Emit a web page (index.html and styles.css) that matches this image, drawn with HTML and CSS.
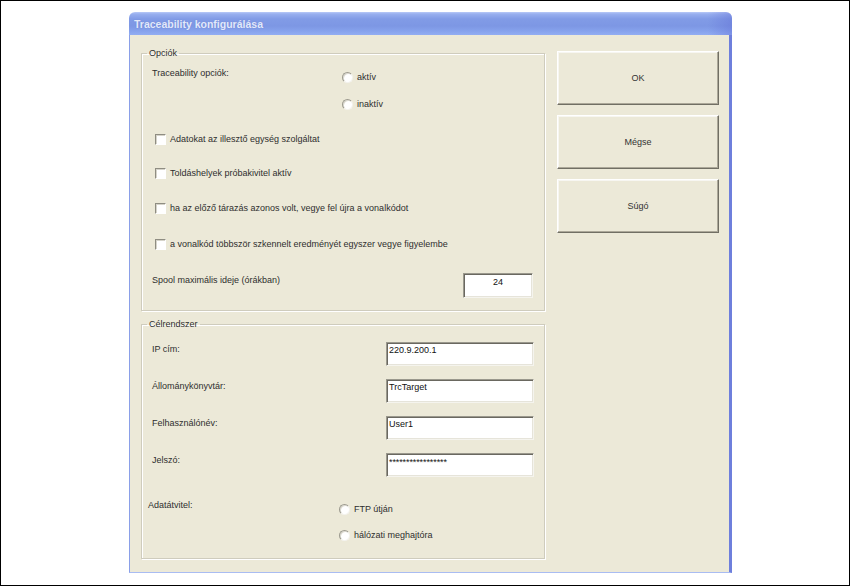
FILE: index.html
```html
<!DOCTYPE html>
<html lang="hu">
<head>
<meta charset="utf-8">
<title>Traceability konfigurálása</title>
<link rel="stylesheet" href="styles.css">
</head>
<body>
<div class="screen">
  <div class="window">
    <div class="titlebar"><span class="title">Traceability konfigurálása</span></div>
    <div class="frame">
      <div class="client">
        <div class="main">
          <fieldset class="group group-opt">
            <legend>Opciók</legend>
            <div class="opt-row">
              <div class="lbl col-opt">Traceability opciók:</div>
              <div class="radios radios-opt">
                <div class="radio"><span class="rb"></span><span class="lbl">aktív</span></div>
                <div class="radio"><span class="rb"></span><span class="lbl">inaktív</span></div>
              </div>
            </div>
            <div class="checks">
              <div class="check c1"><span class="cb"></span><span class="lbl">Adatokat az illesztő egység szolgáltat</span></div>
              <div class="check c2"><span class="cb"></span><span class="lbl">Toldáshelyek próbakivitel aktív</span></div>
              <div class="check c3"><span class="cb"></span><span class="lbl">ha az előző tárazás azonos volt, vegye fel újra a vonalkódot</span></div>
              <div class="check c4"><span class="cb"></span><span class="lbl">a vonalkód többször szkennelt eredményét egyszer vegye figyelembe</span></div>
            </div>
            <div class="spool-row">
              <div class="lbl spool-lbl">Spool maximális ideje (órákban)</div>
              <div class="edit edit-spool">24</div>
            </div>
          </fieldset>
          <fieldset class="group group-target">
            <legend>Célrendszer</legend>
            <div class="fields">
              <div class="field-row"><div class="lbl field-lbl">IP cím:</div><div class="edit edit-wide">220.9.200.1</div></div>
              <div class="field-row"><div class="lbl field-lbl">Állománykönyvtár:</div><div class="edit edit-wide">TrcTarget</div></div>
              <div class="field-row"><div class="lbl field-lbl">Felhasználónév:</div><div class="edit edit-wide">User1</div></div>
              <div class="field-row"><div class="lbl field-lbl">Jelszó:</div><div class="edit edit-wide edit-pass">*****************</div></div>
            </div>
            <div class="transfer-row">
              <div class="lbl col-transfer">Adatátvitel:</div>
              <div class="radios radios-transfer">
                <div class="radio"><span class="rb"></span><span class="lbl">FTP útján</span></div>
                <div class="radio"><span class="rb"></span><span class="lbl">hálózati meghajtóra</span></div>
              </div>
            </div>
          </fieldset>
        </div>
        <div class="buttons">
          <div class="btn">OK</div>
          <div class="btn">Mégse</div>
          <div class="btn">Súgó</div>
        </div>
      </div>
    </div>
  </div>
</div>
</body>
</html>
```
FILE: styles.css
```css
html, body {
  margin: 0;
  padding: 0;
  background: #fff;
}

body {
  font-family: "Liberation Sans", Arial, sans-serif;
  font-size: 9px;
  color: #2e2e2e;
}

.screen {
  width: 850px;
  height: 586px;
  box-sizing: border-box;
  border: 1px solid #000;
  background: #fff;
  padding: 11px 0 0 128px;
}

.window {
  width: 603px;
  height: 561px;
  display: flex;
  flex-direction: column;
  border-radius: 6px 6px 0 0;
  overflow: hidden;
}

.titlebar {
  height: 23px;
  flex: none;
  display: flex;
  align-items: center;
  padding-left: 5px;
  background:
    linear-gradient(to right, rgba(255,255,255,0) 0, rgba(255,255,255,0) 96%, rgba(90,100,210,0.35) 100%),
    linear-gradient(to bottom, #b8c9f7 0, #98afef 2px, #819be6 7px, #7d97e4 14px, #86a2ec 19px, #92adf2 23px);
}

.title {
  font-family: "Liberation Sans", Arial, sans-serif;
  font-weight: bold;
  font-size: 10.5px;
  color: #e2e9fb;
  text-shadow: 0 0 1px rgba(80, 100, 190, 0.5);
  padding-top: 1px;
}

.frame {
  flex: 1;
  display: flex;
  border-left: 1px solid #8a9fe8;
  border-right: 3px solid #6e7fdc;
  border-bottom: 1px solid #a9bcf2;
}

.client {
  flex: 1;
  background: #ece9d8;
  display: flex;
  gap: 12px;
  padding: 13px 0 0 11px;
}

.main {
  width: 404px;
  display: flex;
  flex-direction: column;
}

.lbl {
  line-height: 12px;
  white-space: nowrap;
}

/* group boxes */
.group {
  margin: 0;
  padding: 0 10px;
  min-width: 0;
  box-sizing: border-box;
  border: 1px solid #cfccbd;
  box-shadow: 1px 1px 0 #fff, inset 1px 1px 0 #fff;
}

.group legend {
  padding: 0 2px;
  margin-left: -5px;
  line-height: 11px;
  font-size: 9px;
  color: #2e2e2e;
}

.group-opt {
  height: 263px;
}

.group-target {
  height: 240px;
  margin-top: 8px;
}

/* Opciók */
.opt-row {
  display: flex;
  margin-top: 8px;
}

.col-opt {
  width: 190px;
}

.radios {
  display: flex;
  flex-direction: column;
}

.radios-opt {
  margin-top: 4px;
  gap: 15px;
}

.radio {
  display: flex;
  align-items: center;
  gap: 4px;
  height: 12px;
}

.rb {
  width: 11px;
  height: 11px;
  box-sizing: border-box;
  border-radius: 50%;
  border: 1px solid;
  border-color: #9c9a8f #f4f3ee #f4f3ee #9c9a8f;
  background: radial-gradient(circle at 60% 60%, #ffffff 50%, #eceae1 100%);
  box-shadow: inset 1px 1px 0 #dcdad0;
}

.checks {
  display: flex;
  flex-direction: column;
}

.check {
  display: flex;
  align-items: center;
  gap: 4px;
  height: 12px;
  margin-left: 3px;
}

.c1 { margin-top: 23px; }
.c2 { margin-top: 22px; }
.c3 { margin-top: 23px; }
.c4 { margin-top: 24px; }

.cb {
  width: 11px;
  height: 11px;
  box-sizing: border-box;
  border: 1px solid;
  border-color: #8f8d82 #ffffff #ffffff #8f8d82;
  background: #fff;
  box-shadow: inset 1px 1px 0 #d6d4ca;
}

.spool-row {
  display: flex;
  justify-content: space-between;
  align-items: flex-start;
  margin-top: 23px;
  padding-right: 1px;
}

.spool-lbl {
  padding-top: 1px;
}

/* edit boxes */
.edit {
  box-sizing: border-box;
  background: #fff;
  border: 1px solid;
  border-color: #9a988d #f5f4ee #f5f4ee #9a988d;
  box-shadow: inset 1px 1px 0 #6a6860, inset -1px -1px 0 #e6e4da;
  color: #111;
  line-height: 10px;
  white-space: nowrap;
}

.edit-spool {
  width: 70px;
  height: 25px;
  text-align: center;
  padding-top: 3px;
}

.edit-wide {
  width: 148px;
  height: 24px;
  padding: 2px 0 0 2px;
}

.edit-pass {
  padding-top: 3px;
  letter-spacing: -0.1px;
}

/* Célrendszer */
.fields {
  display: flex;
  flex-direction: column;
  gap: 13px;
  margin-top: 12px;
}

.field-row {
  display: flex;
  justify-content: space-between;
  align-items: flex-start;
  height: 24px;
}

.field-lbl {
  padding-top: 1px;
}

.transfer-row {
  display: flex;
  margin-top: 22px;
  margin-left: -4px;
}

.col-transfer {
  width: 191px;
}

.radios-transfer {
  margin-top: 4px;
  gap: 14px;
}

/* buttons */
.buttons {
  width: 162px;
  display: flex;
  flex-direction: column;
  gap: 10px;
  margin-top: 3px;
}

.btn {
  height: 54px;
  box-sizing: border-box;
  border: 1px solid;
  border-color: #ffffff #716f64 #716f64 #ffffff;
  box-shadow: inset -1px -1px 0 #aca899, inset 1px 1px 0 #f7f6f1;
  background: #ece9d8;
  display: flex;
  align-items: center;
  justify-content: center;
  color: #333;
  line-height: 12px;
}
```
